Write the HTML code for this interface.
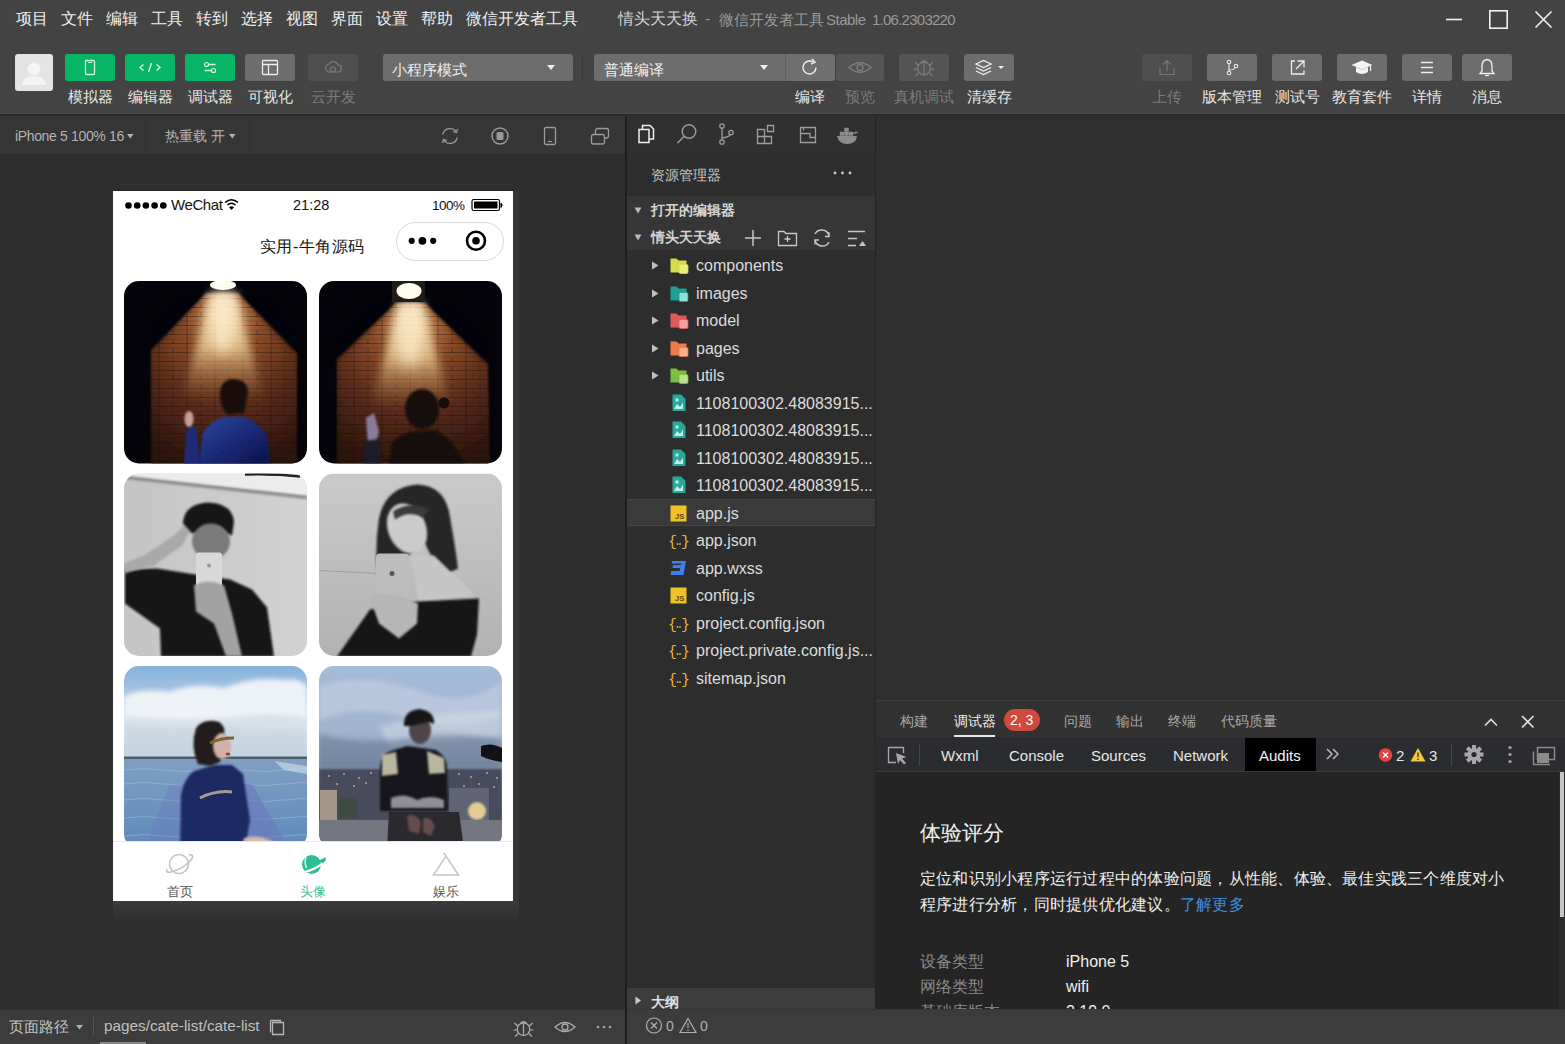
<!DOCTYPE html>
<html><head><meta charset="utf-8">
<style>
*{box-sizing:border-box;margin:0;padding:0}
html,body{width:1565px;height:1044px;overflow:hidden;background:#434343;font-family:"Liberation Sans",sans-serif;color:#e6e6e6}
.a{position:absolute}
.t{position:absolute;white-space:nowrap;line-height:1}
svg{position:absolute;overflow:visible}
/* regions */
#top{left:0;top:0;width:1565px;height:115px;background:#434343}
#tbline{left:0;top:113px;width:1565px;height:3px;background:linear-gradient(#4a4a4a 0,#4a4a4a 33%,#2a2a2a 33%)}
#sim{left:0;top:116px;width:625px;height:893px;background:#2e2e2e}
#simbar{left:0;top:116px;width:625px;height:39px;background:#363636;border-bottom:1.5px solid #2a2a2a}
#vsep{left:625px;top:116px;width:2px;height:930px;background:#1e1e1e}
#exp{left:627px;top:116px;width:248px;height:893px;background:#2d2d2d}
#expbar{left:627px;top:116px;width:248px;height:36px;background:#303030}
#edit{left:875px;top:116px;width:690px;height:584px;background:#2f2f2f;border-left:1px solid #232323}
#dbg{left:875px;top:700px;width:690px;height:309px;background:#242424;border-left:1px solid #232323}
#status{left:0;top:1009px;width:1565px;height:35px;background:#3c3c3c;border-top:1px solid #353535}
.gbtn{position:absolute;top:54px;width:50px;height:27px;border-radius:3px;background:#07b565}
.btn{position:absolute;top:54px;width:50px;height:27px;border-radius:3px;background:#666}
.lbl{position:absolute;top:89px;font-size:15px;line-height:15px;font-weight:500;text-align:center;color:#e8e8e8;white-space:nowrap}
.menu{position:absolute;top:11px;font-size:16px;line-height:16px;font-weight:500;color:#f0f0f0}
</style></head><body>
<div id="top" class="a"></div>
<div id="tbline" class="a"></div>
<div id="sim" class="a"></div>
<div id="simbar" class="a"></div>
<div id="exp" class="a"></div>
<div id="expbar" class="a"></div>
<div id="edit" class="a"></div>
<div id="dbg" class="a"></div>
<div id="status" class="a"></div>
<div id="vsep" class="a"></div>

<!-- MENU -->
<div class="menu" style="left:16px">项目</div>
<div class="menu" style="left:61px">文件</div>
<div class="menu" style="left:106px">编辑</div>
<div class="menu" style="left:151px">工具</div>
<div class="menu" style="left:196px">转到</div>
<div class="menu" style="left:241px">选择</div>
<div class="menu" style="left:286px">视图</div>
<div class="menu" style="left:331px">界面</div>
<div class="menu" style="left:376px">设置</div>
<div class="menu" style="left:421px">帮助</div>
<div class="menu" style="left:466px">微信开发者工具</div>
<div class="menu" style="left:618px;color:#d2d2d2">情头天天换</div>
<div class="menu" style="left:705px;color:#9a9a9a">-</div>
<div class="menu" style="left:719px;top:12px;font-size:15px;color:#9a9a9a">微信开发者工具</div>
<div class="menu" style="left:826px;top:12px;color:#9a9a9a;font-size:15px;letter-spacing:-0.5px">Stable</div>
<div class="menu" style="left:872px;top:12px;color:#9a9a9a;font-size:15px;letter-spacing:-0.75px">1.06.2303220</div>


<!-- TOOLBAR -->
<div class="a" style="left:15px;top:54px;width:38px;height:37px;border-radius:3px;background:#e4e4e4"></div>
<svg style="left:15px;top:54px" width="38" height="37"><circle cx="19" cy="15" r="6.5" fill="#f4f4f4"/><path d="M7 31 Q8 22 19 22 Q30 22 31 31 Z" fill="#f4f4f4"/></svg>
<div class="gbtn" style="left:65px"></div>
<svg style="left:65px;top:54px" width="50" height="27"><rect x="20.5" y="6.5" width="9" height="14" rx="1" fill="none" stroke="#d8f5e4" stroke-width="1.3"/><line x1="23" y1="8.5" x2="27" y2="8.5" stroke="#d8f5e4" stroke-width="1"/></svg>
<div class="gbtn" style="left:125px"></div>
<svg style="left:125px;top:54px" width="50" height="27"><path d="M18.5 10.5 L15 13.5 L18.5 16.5 M31.5 10.5 L35 13.5 L31.5 16.5 M26.5 9 L23.5 18" fill="none" stroke="#d8f5e4" stroke-width="1.4"/></svg>
<div class="gbtn" style="left:185px"></div>
<svg style="left:185px;top:54px" width="50" height="27"><path d="M19.5 10.5 H30.5 M19.5 16.5 H30.5" stroke="#d8f5e4" stroke-width="1.3"/><circle cx="21.5" cy="10.5" r="2" fill="#0fb464" stroke="#d8f5e4" stroke-width="1.2"/><circle cx="28.5" cy="16.5" r="2" fill="#0fb464" stroke="#d8f5e4" stroke-width="1.2"/></svg>
<div class="btn" style="left:245px;background:#6d6d6d"></div>
<svg style="left:245px;top:54px" width="50" height="27"><rect x="17.5" y="6.5" width="15" height="14" rx="1" fill="none" stroke="#eee" stroke-width="1.3"/><path d="M17.5 10.5 H32.5 M23.5 10.5 V20.5" stroke="#eee" stroke-width="1.3"/></svg>
<div class="btn" style="left:308px;background:#4f4f4f"></div>
<svg style="left:308px;top:54px" width="50" height="27"><path d="M19 17 A4 4 0 0 1 21 10 A5 5 0 0 1 30 11 A3.5 3.5 0 0 1 30 18 H22 A3 3 0 0 1 19 17 Z" fill="none" stroke="#7a7a7a" stroke-width="1.2"/><circle cx="25" cy="15.5" r="2.5" fill="none" stroke="#7a7a7a" stroke-width="1.1"/></svg>
<div class="lbl" style="left:65px;width:50px">模拟器</div>
<div class="lbl" style="left:125px;width:50px">编辑器</div>
<div class="lbl" style="left:185px;width:50px">调试器</div>
<div class="lbl" style="left:245px;width:50px">可视化</div>
<div class="lbl" style="left:308px;width:50px;color:#7c7c7c">云开发</div>

<div class="btn" style="left:383px;width:190px;background:#6d6d6d"></div>
<div class="t" style="left:392px;top:61.5px;font-size:15px;font-weight:500;color:#f0f0f0">小程序模式</div>
<svg style="left:547px;top:65px" width="9" height="5"><path d="M0 0 H8 L4 5 Z" fill="#eee"/></svg>
<div class="a" style="left:582px;top:54px;width:1px;height:27px;background:#363636"></div>

<div class="btn" style="left:594px;width:191px;background:#6d6d6d;border-radius:3px 0 0 3px"></div>
<div class="t" style="left:604px;top:61.5px;font-size:15px;font-weight:500;color:#f0f0f0">普通编译</div>
<svg style="left:760px;top:65px" width="9" height="5"><path d="M0 0 H8 L4 5 Z" fill="#eee"/></svg>
<div class="btn" style="left:785px;width:50px;background:#707070;border-radius:0 3px 3px 0;border-left:1px solid #5f5f5f"></div>
<svg style="left:785px;top:54px" width="50" height="27"><path d="M31 13.5 A6.5 6.5 0 1 1 28 8" fill="none" stroke="#f0f0f0" stroke-width="1.4"/><path d="M27 5 L30 8.3 L26 10" fill="none" stroke="#f0f0f0" stroke-width="1.4"/></svg>
<div class="btn" style="left:836px;width:48px;background:#555"></div>
<svg style="left:836px;top:54px" width="48" height="27"><path d="M13 13.5 Q24 4 35 13.5 Q24 23 13 13.5 Z" fill="none" stroke="#7c7c7c" stroke-width="1.3"/><circle cx="24" cy="13.5" r="3" fill="none" stroke="#7c7c7c" stroke-width="1.3"/></svg>
<div class="btn" style="left:899px;width:50px;background:#555"></div>
<svg style="left:899px;top:54px" width="50" height="27"><circle cx="25" cy="14.5" r="6.3" fill="none" stroke="#7c7c7c" stroke-width="1.2"/><path d="M22 8.5 Q25 5.3 28 8.5 M25 6.8 V20.8 M19.1 11.3 L16 8.3 M18.7 15.3 H15 M19.8 18.8 L16.5 21.8 M30.9 11.3 L34 8.3 M31.3 15.3 H35 M30.2 18.8 L33.5 21.8" fill="none" stroke="#7c7c7c" stroke-width="1.2"/></svg>
<div class="btn" style="left:964px;width:50px;background:#6d6d6d"></div>
<svg style="left:964px;top:54px" width="50" height="27"><path d="M12 10 L19.5 6.5 L27 10 L19.5 13.5 Z" fill="none" stroke="#f0f0f0" stroke-width="1.3"/><path d="M12 13.5 L19.5 17 L27 13.5 M12 17 L19.5 20.5 L27 17" fill="none" stroke="#f0f0f0" stroke-width="1.3"/><path d="M34 12 H40 L37 15 Z" fill="#f0f0f0"/></svg>
<div class="lbl" style="left:785px;width:50px">编译</div>
<div class="lbl" style="left:835px;width:50px;color:#7c7c7c">预览</div>
<div class="lbl" style="left:894px;width:60px;color:#7c7c7c">真机调试</div>
<div class="lbl" style="left:959px;width:60px">清缓存</div>

<div class="btn" style="left:1142px;width:50px;background:#4f4f4f"></div>
<svg style="left:1142px;top:54px" width="50" height="27"><path d="M18 14 V20.5 H32 V14 M25 17 V6.5 M21 10.5 L25 6.5 L29 10.5" fill="none" stroke="#777" stroke-width="1.2"/></svg>
<div class="btn" style="left:1207px;width:50px;background:#6d6d6d"></div>
<svg style="left:1207px;top:54px" width="50" height="27"><circle cx="22" cy="8" r="1.8" fill="none" stroke="#eee" stroke-width="1.1"/><circle cx="22" cy="19" r="1.8" fill="none" stroke="#eee" stroke-width="1.1"/><circle cx="29" cy="12" r="1.8" fill="none" stroke="#eee" stroke-width="1.1"/><path d="M22 9.8 V17.2 M22 16 Q27 16 28 13.6" fill="none" stroke="#eee" stroke-width="1.1"/></svg>
<div class="btn" style="left:1272px;width:50px;background:#6d6d6d"></div>
<svg style="left:1272px;top:54px" width="50" height="27"><path d="M23 7 H19.5 V20 H32 V16.5 M25.5 7 H32 V13.5 M32 7 L24 15" fill="none" stroke="#eee" stroke-width="1.3"/></svg>
<div class="btn" style="left:1337px;width:50px;background:#6d6d6d"></div>
<svg style="left:1337px;top:54px" width="50" height="27"><path d="M14.5 11 L25 6.5 L35.5 11 L25 15.5 Z" fill="#f4f4f4"/><path d="M19 13 V18 Q25 22 31 18 V13 L25 15.8 Z" fill="#f4f4f4"/><path d="M33.5 12 V17" stroke="#f4f4f4" stroke-width="1.2"/></svg>
<div class="btn" style="left:1402px;width:50px;background:#6d6d6d"></div>
<svg style="left:1402px;top:54px" width="50" height="27"><path d="M19 8.5 H31 M19 13.5 H31 M19 18.5 H31" stroke="#eee" stroke-width="1.3"/></svg>
<div class="btn" style="left:1462px;width:50px;background:#6d6d6d"></div>
<svg style="left:1462px;top:54px" width="50" height="27"><path d="M25 5.5 Q30 6 30 12 V17 L32 19.5 H18 L20 17 V12 Q20 6 25 5.5 Z" fill="none" stroke="#f0f0f0" stroke-width="1.3"/><path d="M23 21.5 H27" stroke="#f0f0f0" stroke-width="1.3"/></svg>
<div class="lbl" style="left:1142px;width:50px;color:#7c7c7c">上传</div>
<div class="lbl" style="left:1197px;width:70px">版本管理</div>
<div class="lbl" style="left:1267px;width:60px">测试号</div>
<div class="lbl" style="left:1327px;width:70px">教育套件</div>
<div class="lbl" style="left:1402px;width:50px">详情</div>
<div class="lbl" style="left:1462px;width:50px">消息</div>

<!-- window controls -->
<svg style="left:1440px;top:5px" width="120" height="30"><path d="M6 14.5 H22" stroke="#f2f2f2" stroke-width="1.6"/><rect x="49.8" y="5.8" width="17.4" height="17.4" fill="none" stroke="#f2f2f2" stroke-width="1.6"/><path d="M95.5 6.5 L111.5 22.5 M111.5 6.5 L95.5 22.5" stroke="#f2f2f2" stroke-width="1.6"/></svg>

<!-- SIM TOOLBAR -->
<div class="t" style="left:15px;top:128.5px;font-size:14px;color:#b4b4b4;letter-spacing:-0.35px">iPhone 5 100% 16</div>
<svg style="left:127px;top:133.5px" width="7" height="5"><path d="M0 0 H6.5 L3.25 4.5 Z" fill="#b4b4b4"/></svg>
<div class="a" style="left:145px;top:118px;width:1px;height:32px;background:#2f2f2f"></div>
<div class="t" style="left:165px;top:128.5px;font-size:14px;font-weight:500;color:#b4b4b4">热重载 开</div>
<svg style="left:229px;top:133.5px" width="7" height="5"><path d="M0 0 H6.5 L3.25 4.5 Z" fill="#b4b4b4"/></svg>
<div class="a" style="left:249px;top:118px;width:1px;height:32px;background:#2f2f2f"></div>
<svg style="left:440px;top:126px" width="180" height="20">
 <path d="M2.7 8.5 A7.5 7.5 0 0 1 16.3 6 M17.3 11.5 A7.5 7.5 0 0 1 3.7 14" fill="none" stroke="#9a9a9a" stroke-width="1.3"/>
 <path d="M17.5 3 L16.5 6.5 L13 5.5 M2.5 17 L3.5 13.5 L7 14.5" fill="none" stroke="#9a9a9a" stroke-width="1.3"/>
 <circle cx="60" cy="10" r="8" fill="none" stroke="#9a9a9a" stroke-width="1.4"/>
 <rect x="56.5" y="6" width="7" height="8" rx="1.5" fill="#9a9a9a"/>
 <rect x="104.5" y="1.5" width="11" height="17" rx="1.5" fill="none" stroke="#9a9a9a" stroke-width="1.3"/>
 <path d="M108 15.5 H112" stroke="#9a9a9a" stroke-width="1.2"/>
 <rect x="155.5" y="2.5" width="13" height="9.5" rx="2" fill="none" stroke="#9a9a9a" stroke-width="1.3"/>
 <rect x="151.5" y="8.5" width="13" height="9.5" rx="2" fill="#363636" stroke="#9a9a9a" stroke-width="1.3"/>
</svg>

<!-- PHONE -->
<div class="a" style="left:113px;top:901px;width:406px;height:22px;background:linear-gradient(#3b3b3b,rgba(46,46,46,0))"></div>
<div class="a" style="left:113px;top:191px;width:400px;height:710px;background:#fff;box-shadow:0 -1px 0 0 #252525,6px 0 0 0 #363636"></div>
<svg style="left:113px;top:191px" width="400" height="80">
 <circle cx="15.5" cy="14.5" r="3.3" fill="#000"/><circle cx="24.2" cy="14.5" r="3.3" fill="#000"/><circle cx="32.9" cy="14.5" r="3.3" fill="#000"/><circle cx="41.6" cy="14.5" r="3.3" fill="#000"/><circle cx="50.3" cy="14.5" r="3.3" fill="#000"/>
 <path d="M112 11.5 Q118.5 6 125 11.5" fill="none" stroke="#000" stroke-width="1.6"/>
 <path d="M114.5 14 Q118.5 10.5 122.5 14" fill="none" stroke="#000" stroke-width="1.6"/>
 <path d="M116 16.3 L118.5 19 L121 16.3 Q118.5 14 116 16.3 Z" fill="#000"/>
 <rect x="359" y="8.5" width="27.5" height="11" rx="1.8" fill="none" stroke="#000" stroke-width="1.2"/>
 <rect x="361" y="10.5" width="23.5" height="7" fill="#000"/>
 <path d="M388 12 Q390.5 14 388 16.5 Z" fill="#000" stroke="#000" stroke-width="1"/>
</svg>
<div class="t" style="left:171px;top:197px;font-size:15px;color:#111;letter-spacing:-0.4px">WeChat</div>
<div class="t" style="left:293px;top:198px;font-size:14.5px;color:#111">21:28</div>
<div class="t" style="left:432px;top:199px;font-size:13.5px;color:#111;letter-spacing:-0.5px">100%</div>
<div class="t" style="left:260px;top:238.5px;font-size:16px;color:#111;letter-spacing:0.45px">实用-牛角源码</div>
<div class="a" style="left:395.5px;top:221.5px;width:108px;height:39px;border-radius:20px;border:1.3px solid #dadada;background:#fff"></div>
<svg style="left:395px;top:221px" width="110" height="40">
 <circle cx="16.7" cy="19.8" r="3.1" fill="#000"/><circle cx="27.4" cy="19.8" r="3.9" fill="#000"/><circle cx="38.2" cy="19.8" r="3.1" fill="#000"/>
 <circle cx="81" cy="19.8" r="9" fill="none" stroke="#000" stroke-width="2.6"/><circle cx="81" cy="19.8" r="3.8" fill="#000"/>
</svg>

<!-- PHOTOS -->
<svg style="left:113px;top:271px" width="400" height="570">
<defs>
 <clipPath id="cp"><rect x="0" y="0" width="183" height="182.5" rx="15"/></clipPath>
 <filter id="b1" x="-20%" y="-20%" width="140%" height="140%"><feGaussianBlur stdDeviation="2.5"/></filter>
 <filter id="b2" x="-20%" y="-20%" width="140%" height="140%"><feGaussianBlur stdDeviation="1"/></filter>
 <filter id="b3" x="-30%" y="-30%" width="160%" height="160%"><feGaussianBlur stdDeviation="4"/></filter>
 <filter id="b4" x="-50%" y="-50%" width="200%" height="200%"><feGaussianBlur stdDeviation="7"/></filter>
 <radialGradient id="wall1" cx="0.5" cy="0.1" r="0.95">
  <stop offset="0" stop-color="#d0905a"/><stop offset="0.3" stop-color="#8c4c2a"/><stop offset="0.65" stop-color="#55291a"/><stop offset="1" stop-color="#2a140a"/>
 </radialGradient>
 <linearGradient id="beam" x1="0" y1="0" x2="0" y2="1"><stop offset="0" stop-color="#fff6d8"/><stop offset="0.5" stop-color="#f2d69c"/><stop offset="1" stop-color="#b07a48" stop-opacity="0"/></linearGradient>
 <linearGradient id="blue1" x1="0" y1="0" x2="1" y2="1"><stop offset="0" stop-color="#2c4aa0"/><stop offset="0.5" stop-color="#1a2a78"/><stop offset="1" stop-color="#0a1248"/></linearGradient>
 <pattern id="brick" width="28" height="9" patternUnits="userSpaceOnUse"><path d="M0 8.5 H28 M7 0 V8.5 M21 4.5 V9" stroke="#1a0c06" stroke-width="1" opacity="0.4" fill="none"/><path d="M0 4 H28" stroke="#1a0c06" stroke-width="0.8" opacity="0.25"/></pattern>
 <linearGradient id="gw3" x1="0" y1="0" x2="1" y2="0"><stop offset="0" stop-color="#c4c4c4"/><stop offset="1" stop-color="#d2d2d2"/></linearGradient>
 <linearGradient id="gw4" x1="0" y1="0" x2="0" y2="1"><stop offset="0" stop-color="#cacaca"/><stop offset="1" stop-color="#b2b2b2"/></linearGradient>
 <linearGradient id="sky5" x1="0" y1="0" x2="0" y2="1"><stop offset="0" stop-color="#86b2da"/><stop offset="0.12" stop-color="#a0c2e0"/><stop offset="0.32" stop-color="#e0e8ee"/><stop offset="0.55" stop-color="#bccfdc"/><stop offset="0.7" stop-color="#a8bdd0"/></linearGradient>
 <linearGradient id="sea5" x1="0" y1="0" x2="0" y2="1"><stop offset="0" stop-color="#7f9fc2"/><stop offset="1" stop-color="#5e88ba"/></linearGradient>
 <linearGradient id="sky6" x1="0" y1="0" x2="0" y2="1"><stop offset="0" stop-color="#a5bcda"/><stop offset="0.35" stop-color="#a0b4cc"/><stop offset="0.6" stop-color="#7d90aa"/><stop offset="1" stop-color="#5b6a84"/></linearGradient>
</defs>

<!-- photo1 -->
<g transform="translate(11,10)" clip-path="url(#cp)">
 <rect width="183" height="183" fill="#04040a"/>
 <polygon points="82,12 114,12 173,72 173,183 27,183 27,69" fill="url(#wall1)" filter="url(#b2)"/>
 <polygon points="82,12 114,12 173,72 173,183 27,183 27,69" fill="url(#brick)"/>
 <polygon points="86,12 112,12 140,120 58,120" fill="url(#beam)" opacity="0.75" filter="url(#b3)"/>
 <ellipse cx="99" cy="40" rx="13" ry="32" fill="#fff4d4" opacity="0.7" filter="url(#b4)"/>
 <ellipse cx="99" cy="4" rx="13" ry="5" fill="#fffbee"/>
 <path d="M27 69 L82 12 L60 12 L27 45 Z M173 72 L114 12 L140 12 L173 50 Z" fill="#04040a" opacity="0.5" filter="url(#b3)"/>
 <path d="M74 183 L79 152 Q86 140 100 136 L121 136 Q136 142 144 157 L146 183 Z" fill="url(#blue1)" filter="url(#b2)"/>
 <path d="M60 183 L62 152 L67 142 L73 150 L76 183 Z" fill="#1a2a78" filter="url(#b2)"/>
 <ellipse cx="65" cy="138" rx="4.5" ry="8" fill="#c4a094" filter="url(#b2)"/>
 <path d="M96 112 Q97 98 110 98 Q124 99 124 112 L120 132 L104 134 Q95 126 96 112 Z" fill="#1a100c" filter="url(#b2)"/>
</g>
<!-- photo2 -->
<g transform="translate(206,10)" clip-path="url(#cp)">
 <rect width="183" height="183" fill="#04040a"/>
 <polygon points="77,22 106,22 169,83 171,183 18,183 18,78" fill="url(#wall1)" filter="url(#b2)"/>
 <polygon points="77,22 106,22 169,83 171,183 18,183 18,78" fill="url(#brick)"/>
 <polygon points="79,22 104,22 132,128 52,128" fill="url(#beam)" opacity="0.75" filter="url(#b3)"/>
 <ellipse cx="91" cy="52" rx="13" ry="34" fill="#fff4d4" opacity="0.65" filter="url(#b4)"/>
 <rect x="73" y="0" width="33" height="21" fill="#221c16"/>
 <ellipse cx="90" cy="10" rx="12.5" ry="8" fill="#fffcf0"/>
 <path d="M18 78 L77 22 L50 22 L18 55 Z M169 83 L106 22 L135 22 L171 60 Z" fill="#04040a" opacity="0.5" filter="url(#b3)"/>
 <path d="M70 183 L73 162 Q80 153 92 151 L116 149 Q132 156 143 179 L145 183 Z" fill="#120b09" filter="url(#b2)"/>
 <ellipse cx="103" cy="128" rx="17" ry="20" fill="#140d0a" filter="url(#b2)"/>
 <circle cx="125" cy="122" r="5.5" fill="#140d0a"/>
 <path d="M47 137 L55 132 L60 150 L57 163 L49 163 Z" fill="#8a7a9c" filter="url(#b2)"/>
 <path d="M46 160 L60 158 L62 183 L44 183 Z" fill="#1e1a2a" filter="url(#b2)"/>
</g>
<!-- photo3 -->
<g transform="translate(11,202.5)" clip-path="url(#cp)">
 <rect width="183" height="183" fill="url(#gw3)"/>
 <polygon points="0,0 183,0 183,22 0,3" fill="#ececec"/>
 <path d="M2 4 L183 24" stroke="#8e8e8e" stroke-width="3.5" filter="url(#b2)"/>
 <path d="M121 1 Q150 0 176 3" stroke="#222" stroke-width="2.5"/>
 <path d="M1 96 L1 130 L36 155 L37 183 L150 183 L143 134 L128 116 L106 106 L71 101 L33 95 Z" fill="#121212" filter="url(#b2)"/>
 <path d="M0 90 L20 82 L50 62 L60 52 L66 58 L58 72 L30 92 L0 100 Z" fill="#a9a9a9" filter="url(#b2)"/>
 <path d="M59 50 Q60 30 85 29 Q108 30 110 48 L108 62 L98 58 L68 60 Z" fill="#141414" filter="url(#b2)"/>
 <ellipse cx="87" cy="68" rx="19" ry="18" fill="#7a7a7a" filter="url(#b2)"/>
 <rect x="72" y="79" width="26" height="38" rx="3" fill="#d9d9d9"/>
 <circle cx="85" cy="92" r="2" fill="#9a9a9a"/>
 <path d="M70 112 Q84 104 100 112 L108 140 L118 183 L102 183 L90 150 L72 138 Z" fill="#a2a2a2" filter="url(#b2)"/>
</g>
<!-- photo4 -->
<g transform="translate(206,202.5)" clip-path="url(#cp)">
 <rect width="183" height="183" fill="url(#gw4)"/>
 <path d="M0 97 L60 100" stroke="#8a8a8a" stroke-width="1" opacity="0.6"/>
 <path d="M60 45 Q66 14 98 11 Q124 12 130 38 Q134 60 137 80 L139 95 L128 100 L116 90 L106 70 L80 88 L66 96 L58 96 Q56 70 60 45 Z" fill="#262626" filter="url(#b2)"/>
 <ellipse cx="88" cy="55" rx="19" ry="26" transform="rotate(-22 88 55)" fill="#cbcbcb" filter="url(#b2)"/>
 <path d="M74 38 Q92 26 110 36 L104 44 Q90 36 76 46 Z" fill="#3a3a3a" filter="url(#b2)"/>
 <path d="M92 82 L115 82 L156 122 L100 130 Z" fill="#c6c6c6" filter="url(#b2)"/>
 <rect x="57" y="80" width="33" height="48" rx="4" fill="#bdbdbd"/>
 <circle cx="73" cy="100" r="2.5" fill="#555"/>
 <path d="M18 183 L51 136 L99 128 L160 125 L158 161 L152 183 Z" fill="#151515" filter="url(#b2)"/>
 <path d="M50 122 Q70 116 99 130 L98 150 L80 165 L60 150 Z" fill="#b6b6b6" filter="url(#b2)"/>
</g>
<!-- photo5 -->
<g transform="translate(11,395)" clip-path="url(#cp)">
 <rect width="183" height="183" fill="url(#sky5)"/>
 <path d="M0 30 Q20 22 45 26 Q70 16 100 22 Q130 10 160 14 Q175 12 183 20 L183 62 Q140 66 100 58 Q50 64 0 58 Z" fill="#f4f7fa" opacity="0.92" filter="url(#b1)"/>
 <path d="M0 50 Q60 56 120 50 Q160 46 183 52 L183 88 L0 88 Z" fill="#c5d4e0" opacity="0.6" filter="url(#b1)"/>
 <rect y="90.5" width="183" height="2.5" fill="#4f5e6c"/>
 <rect y="93" width="183" height="92" fill="url(#sea5)"/>
 <g stroke="#a9c3dc" stroke-width="1" opacity="0.5" fill="none">
  <path d="M0 104 Q20 101 40 104 T80 104 T120 104 T160 104 T200 104"/>
  <path d="M0 118 Q20 115 40 118 T80 118 T120 118 T160 118 T200 118"/>
  <path d="M0 134 Q20 131 40 134 T80 134 T120 134 T160 134 T200 134"/>
  <path d="M0 152 Q20 149 40 152 T80 152 T120 152 T160 152 T200 152"/>
  <path d="M0 170 Q20 167 40 170 T80 170 T120 170 T160 170 T200 170"/>
 </g>
 <path d="M150 95 L183 100 L183 108 L160 104 Z" fill="#d6e0ea" opacity="0.6"/>
 <path d="M110 118 L128 118 L165 183 L95 183 Z" fill="#6a78c0" opacity="0.6"/>
 <path d="M45 120 L60 118 L55 183 L20 183 Z" fill="#6a78c0" opacity="0.35"/>
 <path d="M56 183 L57 129 Q60 112 70 105 L90 99 L108 99 L119 108 L126 154 L121 183 Z" fill="#1e2964" filter="url(#b2)"/>
 <path d="M76 132 Q92 124 108 126" stroke="#c8b890" stroke-width="3" fill="none" opacity="0.8"/>
 <path d="M72 62 Q80 52 95 56 Q102 60 100 70 L96 96 L86 100 L74 98 Q66 80 72 62 Z" fill="#241c1c" filter="url(#b2)"/>
 <ellipse cx="98" cy="80" rx="9" ry="13" fill="#d2b2a8" filter="url(#b2)"/>
 <path d="M86 77 Q96 72 110 72" stroke="#7a6430" stroke-width="3" fill="none"/>
 <ellipse cx="104" cy="88" rx="2.5" ry="1.5" fill="#a04040"/>
 <path d="M118 183 L120 172 Q135 168 150 176 L152 183 Z" fill="#d8b8a8" filter="url(#b2)"/>
</g>
<!-- photo6 -->
<g transform="translate(206,395)" clip-path="url(#cp)">
 <rect width="183" height="183" fill="url(#sky6)"/>
 <path d="M0 20 Q50 5 110 28 Q150 40 183 15 L183 50 Q130 70 80 50 Q40 38 0 55 Z" fill="#c8d4e4" opacity="0.55" filter="url(#b1)"/>
 <path d="M60 60 Q120 45 183 45 L183 70 Q120 75 70 80 Z" fill="#dbe3ee" opacity="0.45" filter="url(#b1)"/>
 <path d="M0 68 Q40 80 90 72 Q140 65 183 75 L183 104 L0 104 Z" fill="#687894" opacity="0.55" filter="url(#b1)"/>
 <rect y="103" width="183" height="52" fill="#474c5c" filter="url(#b2)"/>
 <g fill="#e6d8b0" opacity="0.75">
  <circle cx="10" cy="110" r="0.9"/><circle cx="25" cy="108" r="0.9"/><circle cx="40" cy="112" r="0.9"/><circle cx="52" cy="107" r="0.9"/><circle cx="140" cy="108" r="0.9"/><circle cx="152" cy="111" r="0.9"/><circle cx="168" cy="107" r="0.9"/><circle cx="178" cy="112" r="0.9"/>
  <circle cx="18" cy="118" r="0.9"/><circle cx="35" cy="120" r="0.9"/><circle cx="47" cy="117" r="0.9"/><circle cx="145" cy="120" r="0.9"/><circle cx="160" cy="118" r="0.9"/><circle cx="175" cy="121" r="0.9"/>
 </g>
 <rect x="1" y="124" width="17" height="30" fill="#b5a592" opacity="0.85"/>
 <rect x="20" y="132" width="18" height="20" fill="#3e4a3c" opacity="0.8" filter="url(#b2)"/>
 <rect x="130" y="122" width="40" height="32" fill="#6a6e80" opacity="0.7"/>
 <ellipse cx="158" cy="145" rx="9" ry="9" fill="#f0d898" opacity="0.9" filter="url(#b2)"/>
 <rect y="154" width="183" height="30" fill="#74767f"/>
 <path d="M162 80 Q172 76 183 82 L183 96 Q170 94 162 90 Z" fill="#121216"/>
 <path d="M68 183 L70 146 L140 146 L145 183 Z" fill="#2a292e"/>
 <path d="M61 145 L61 101 Q63 88 72 85 L88 80 L117 84 Q127 90 128 101 L129 145 Z" fill="#16161d" filter="url(#b2)"/>
 <path d="M63 89 L77 86 L79 108 L63 110 Z M108 85 L125 92 L126 107 L110 108 Z" fill="#b9b6a0" filter="url(#b2)"/>
 <path d="M72 132 Q85 126 98 134 Q112 128 125 134 L125 142 L72 142 Z" fill="#d0d0d8" opacity="0.65" filter="url(#b2)"/>
 <ellipse cx="101" cy="64" rx="11" ry="14" fill="#50444a" filter="url(#b2)"/>
 <path d="M85 60 Q84 45 100 43 Q116 45 115 58 L110 56 L92 60 Z" fill="#141418" filter="url(#b2)"/>
 <path d="M88 150 Q96 146 102 156 L100 168 L90 165 Z M104 152 Q112 150 116 160 L112 170 L104 166 Z" fill="#7a5a58" opacity="0.75" filter="url(#b2)"/>
</g>
</svg>

<!-- TABBAR -->
<div class="a" style="left:113px;top:841px;width:400px;height:60px;background:#fff;border-top:1px solid #e8e8e8"></div>
<svg style="left:113px;top:842px" width="400" height="40">
 <circle cx="66" cy="22" r="9.5" fill="none" stroke="#c4c4c4" stroke-width="1.6"/>
 <path d="M54 27 Q52 31 58 30 Q70 27 78 18 Q82 12 76 13" fill="none" stroke="#c4c4c4" stroke-width="1.6"/>
 <circle cx="198.5" cy="22.5" r="9.5" fill="#2dbf93"/>
 <path d="M186 31 Q196 30 206 24 Q214 19 211 17" fill="none" stroke="#fff" stroke-width="2.2"/>
 <path d="M204 19.5 Q210 16 212.5 15.5 Q214 18 210 21 Z" fill="#2dbf93"/>
 <path d="M193 15 Q191 20 193.5 26" fill="none" stroke="#c8f5e6" stroke-width="1.6"/>
 <path d="M333 33 L320.5 33 L333 14 L345.5 33 Z M320 33 H346 M333 14 L331 11" fill="none" stroke="#c4c4c4" stroke-width="1.5"/>
</svg>
<div class="t" style="left:167px;top:885px;font-size:13px;font-weight:500;color:#555">首页</div>
<div class="t" style="left:300px;top:885px;font-size:13px;font-weight:500;color:#3cc19a">头像</div>
<div class="t" style="left:433px;top:885px;font-size:13px;font-weight:500;color:#555">娱乐</div>

<!-- SIM STATUS -->
<div class="t" style="left:9px;top:1019px;font-size:15px;font-weight:500;color:#c4c4c4">页面路径</div>
<svg style="left:76px;top:1025px" width="8" height="5"><path d="M0 0 H7 L3.5 4.5 Z" fill="#b0b0b0"/></svg>
<div class="a" style="left:93px;top:1017px;width:1px;height:18px;background:#555"></div>
<div class="t" style="left:104px;top:1018px;font-size:15.3px;color:#c0c0c0">pages/cate-list/cate-list</div>
<svg style="left:266px;top:1017px" width="20" height="20"><path d="M4.5 3.5 H14.5 V4.5 M4.5 3.5 V15.5 M6.5 5.5 H17.5 V17.5 H6.5 Z" fill="none" stroke="#b8b8b8" stroke-width="1.3"/></svg>
<div class="a" style="left:100px;top:1042px;width:46px;height:2px;background:#8a8a8a"></div>
<svg style="left:510px;top:1016px" width="110" height="22">
 <circle cx="13.5" cy="13.2" r="6.3" fill="none" stroke="#b0b0b0" stroke-width="1.2"/><path d="M10.5 7.2 Q13.5 4 16.5 7.2 M13.5 5.5 V19.5 M7.6 10 L4.5 7 M7.2 14 H3.5 M8.3 17.5 L5 20.5 M19.4 10 L22.5 7 M19.8 14 H23.5 M18.7 17.5 L22 20.5" fill="none" stroke="#b0b0b0" stroke-width="1.2"/>
 <path d="M45 11 Q55 2 65 11 Q55 20 45 11 Z" fill="none" stroke="#aaa" stroke-width="1.3"/><circle cx="55" cy="11" r="3" fill="none" stroke="#aaa" stroke-width="1.3"/>
 <circle cx="88" cy="11" r="1.3" fill="#aaa"/><circle cx="94" cy="11" r="1.3" fill="#aaa"/><circle cx="100" cy="11" r="1.3" fill="#aaa"/>
</svg>

<!-- EXPLORER -->
<svg style="left:627px;top:116px" width="248" height="40">
 <path d="M12 13.5 V26.5 H22 V13.5 Z" fill="none" stroke="#f0f0f0" stroke-width="1.5"/>
 <path d="M15.5 13.5 V9.5 H23 L26.5 13 V23 H22" fill="none" stroke="#f0f0f0" stroke-width="1.5"/>
 <circle cx="62" cy="15.5" r="6.8" fill="none" stroke="#9c9c9c" stroke-width="1.4"/>
 <path d="M57.2 20.3 L50.5 27" stroke="#9c9c9c" stroke-width="1.5"/>
 <circle cx="95" cy="10" r="2.2" fill="none" stroke="#9c9c9c" stroke-width="1.3"/>
 <circle cx="95" cy="26" r="2.2" fill="none" stroke="#9c9c9c" stroke-width="1.3"/>
 <circle cx="104" cy="16.5" r="2.2" fill="none" stroke="#9c9c9c" stroke-width="1.3"/>
 <path d="M95 12.2 V23.8 M95 22 Q102 21 103.5 18.7" fill="none" stroke="#9c9c9c" stroke-width="1.3"/>
 <path d="M130.5 13.5 H137.5 V20.5 H130.5 Z M130.5 20.5 H137.5 V27.5 H130.5 Z M137.5 20.5 H144.5 V27.5 H137.5 Z M140.5 9.5 H146.5 V15.5 H140.5 Z" fill="none" stroke="#9c9c9c" stroke-width="1.3"/>
 <path d="M173.5 11.5 H188.5 V26.5 H173.5 Z M173.5 17.5 H183 V21.5 H188.5 M176.5 11.5 V14.5" fill="none" stroke="#9c9c9c" stroke-width="1.3"/>
 <path d="M210 20 H230 Q229 28 220 28 Q212 28 210 20 Z" fill="#8c8c8c"/>
 <path d="M213 16 H217 V19.5 H213 Z M217.5 16 H221.5 V19.5 H217.5 Z M222 16 H226 V19.5 H222 Z M217.5 12 H221.5 V15.5 H217.5 Z M226 18 Q229 14 231 17" fill="#8c8c8c" stroke="#8c8c8c" stroke-width="0.5"/>
</svg>
<div class="t" style="left:651px;top:168px;font-size:14px;font-weight:500;color:#c8c8c8">资源管理器</div>
<svg style="left:832px;top:170px" width="24" height="6"><circle cx="3" cy="3" r="1.4" fill="#ccc"/><circle cx="10.5" cy="3" r="1.4" fill="#ccc"/><circle cx="18" cy="3" r="1.4" fill="#ccc"/></svg>
<div class="a" style="left:627px;top:196px;width:248px;height:54px;background:#363636"></div>
<svg style="left:633px;top:206px" width="10" height="40"><path d="M1.5 1.5 H8.5 L5 7.5 Z" fill="#bbb"/><path d="M1.5 28.5 H8.5 L5 34.5 Z" fill="#bbb"/></svg>
<div class="t" style="left:651px;top:203px;font-size:14px;font-weight:600;color:#d4d4d4">打开的编辑器</div>
<div class="t" style="left:651px;top:230px;font-size:14px;font-weight:600;color:#d4d4d4">情头天天换</div>
<svg style="left:740px;top:227px" width="130" height="22">
 <path d="M13 3 V19 M5 11 H21" stroke="#c8c8c8" stroke-width="1.5"/>
 <path d="M38.5 4.5 H44 L46 6.5 H56.5 V18.5 H38.5 Z M47.5 9 V15 M44.5 12 H50.5" fill="none" stroke="#c8c8c8" stroke-width="1.3"/>
 <path d="M75 7 A7.5 7.5 0 0 1 89 9 M89 15 A7.5 7.5 0 0 1 75 13" fill="none" stroke="#c8c8c8" stroke-width="1.4"/>
 <path d="M89 5 V9.5 H85 M75 17.5 V13 H79" fill="none" stroke="#c8c8c8" stroke-width="1.3"/>
 <path d="M108 4.5 H125 M108 11.5 H117 M108 18.5 H116" stroke="#c8c8c8" stroke-width="1.4"/><path d="M119 19 L122.5 14 L126 19 Z" fill="#c8c8c8"/>
</svg>
<div class="a" style="left:627px;top:499px;width:248px;height:27px;background:#3a3a3a;border-top:1px solid #454545;border-bottom:1px solid #454545"></div>

<svg style="left:651px;top:261.2px" width="9" height="10"><path d="M1 0.5 L7.5 4.5 L1 8.5 Z" fill="#c0c0c0"/></svg>
<svg style="left:669px;top:257.2px" width="22" height="18"><path d="M1.5 1.5 H7.5 L9.5 3.5 H17.5 V15.5 H1.5 Z" fill="#d4dc4a"/><rect x="10" y="7.5" width="9" height="9" rx="1.5" fill="#e8ee7a" stroke="#d4dc4a" stroke-width="0.8"/></svg>
<div class="t" style="left:696px;top:257.2px;font-size:16px;line-height:18px;color:#dcdcdc">components</div>
<svg style="left:651px;top:288.7px" width="9" height="10"><path d="M1 0.5 L7.5 4.5 L1 8.5 Z" fill="#c0c0c0"/></svg>
<svg style="left:669px;top:284.7px" width="22" height="18"><path d="M1.5 1.5 H7.5 L9.5 3.5 H17.5 V15.5 H1.5 Z" fill="#1f9f94"/><rect x="10" y="7.5" width="9" height="9" rx="1.5" fill="#8fe0d8" stroke="#1f9f94" stroke-width="0.8"/></svg>
<div class="t" style="left:696px;top:284.7px;font-size:16px;line-height:18px;color:#dcdcdc">images</div>
<svg style="left:651px;top:316.2px" width="9" height="10"><path d="M1 0.5 L7.5 4.5 L1 8.5 Z" fill="#c0c0c0"/></svg>
<svg style="left:669px;top:312.2px" width="22" height="18"><path d="M1.5 1.5 H7.5 L9.5 3.5 H17.5 V15.5 H1.5 Z" fill="#e05a5a"/><rect x="10" y="7.5" width="9" height="9" rx="1.5" fill="#f5a0a0" stroke="#e05a5a" stroke-width="0.8"/></svg>
<div class="t" style="left:696px;top:312.2px;font-size:16px;line-height:18px;color:#dcdcdc">model</div>
<svg style="left:651px;top:343.7px" width="9" height="10"><path d="M1 0.5 L7.5 4.5 L1 8.5 Z" fill="#c0c0c0"/></svg>
<svg style="left:669px;top:339.7px" width="22" height="18"><path d="M1.5 1.5 H7.5 L9.5 3.5 H17.5 V15.5 H1.5 Z" fill="#f07a4a"/><rect x="10" y="7.5" width="9" height="9" rx="1.5" fill="#f8b090" stroke="#f07a4a" stroke-width="0.8"/></svg>
<div class="t" style="left:696px;top:339.7px;font-size:16px;line-height:18px;color:#dcdcdc">pages</div>
<svg style="left:651px;top:371.2px" width="9" height="10"><path d="M1 0.5 L7.5 4.5 L1 8.5 Z" fill="#c0c0c0"/></svg>
<svg style="left:669px;top:367.2px" width="22" height="18"><path d="M1.5 1.5 H7.5 L9.5 3.5 H17.5 V15.5 H1.5 Z" fill="#7cbf3f"/><rect x="10" y="7.5" width="9" height="9" rx="1.5" fill="#b8e090" stroke="#7cbf3f" stroke-width="0.8"/></svg>
<div class="t" style="left:696px;top:367.2px;font-size:16px;line-height:18px;color:#dcdcdc">utils</div>
<svg style="left:671px;top:393.7px" width="16" height="18"><path d="M1.5 0.5 H10 L14.5 5 V17 H1.5 Z" fill="#2aa79b"/><path d="M3 15 L6 10 L9 13 L12 8.5 V15 Z M4.5 4.5 H7.5 V7.5 H4.5 Z" fill="#bff0ea"/></svg>
<div class="t" style="left:696px;top:394.7px;font-size:16px;line-height:18px;color:#dcdcdc">1108100302.48083915...</div>
<svg style="left:671px;top:421.2px" width="16" height="18"><path d="M1.5 0.5 H10 L14.5 5 V17 H1.5 Z" fill="#2aa79b"/><path d="M3 15 L6 10 L9 13 L12 8.5 V15 Z M4.5 4.5 H7.5 V7.5 H4.5 Z" fill="#bff0ea"/></svg>
<div class="t" style="left:696px;top:422.2px;font-size:16px;line-height:18px;color:#dcdcdc">1108100302.48083915...</div>
<svg style="left:671px;top:448.7px" width="16" height="18"><path d="M1.5 0.5 H10 L14.5 5 V17 H1.5 Z" fill="#2aa79b"/><path d="M3 15 L6 10 L9 13 L12 8.5 V15 Z M4.5 4.5 H7.5 V7.5 H4.5 Z" fill="#bff0ea"/></svg>
<div class="t" style="left:696px;top:449.7px;font-size:16px;line-height:18px;color:#dcdcdc">1108100302.48083915...</div>
<svg style="left:671px;top:476.2px" width="16" height="18"><path d="M1.5 0.5 H10 L14.5 5 V17 H1.5 Z" fill="#2aa79b"/><path d="M3 15 L6 10 L9 13 L12 8.5 V15 Z M4.5 4.5 H7.5 V7.5 H4.5 Z" fill="#bff0ea"/></svg>
<div class="t" style="left:696px;top:477.2px;font-size:16px;line-height:18px;color:#dcdcdc">1108100302.48083915...</div>
<svg style="left:670px;top:504.7px" width="18" height="18"><rect x="0.5" y="0.5" width="16" height="16" fill="#f0c228"/><text x="5" y="14" font-size="7.5" font-family="Liberation Sans" fill="#5a4a10" font-weight="bold">JS</text></svg>
<div class="t" style="left:696px;top:504.7px;font-size:16px;line-height:18px;color:#dcdcdc">app.js</div>
<svg style="left:668px;top:531.2px" width="22" height="18"><text x="0" y="14.5" font-size="15" font-family="Liberation Mono" fill="#e8b63a">{</text><text x="13" y="14.5" font-size="15" font-family="Liberation Mono" fill="#e8b63a">}</text><circle cx="9.5" cy="13" r="0.9" fill="#e8b63a"/><circle cx="12" cy="13" r="0.9" fill="#e8b63a"/></svg>
<div class="t" style="left:696px;top:532.2px;font-size:16px;line-height:18px;color:#dcdcdc">app.json</div>
<svg style="left:670px;top:558.7px" width="18" height="18"><path d="M2 2 H16 L13.5 16 H0.5 L1.3 12 H9.5 L10.2 9 H2.5 L3 6 H11 L11.6 4.5 H1.6 Z" fill="#3d7ff0"/></svg>
<div class="t" style="left:696px;top:559.7px;font-size:16px;line-height:18px;color:#dcdcdc">app.wxss</div>
<svg style="left:670px;top:587.2px" width="18" height="18"><rect x="0.5" y="0.5" width="16" height="16" fill="#f0c228"/><text x="5" y="14" font-size="7.5" font-family="Liberation Sans" fill="#5a4a10" font-weight="bold">JS</text></svg>
<div class="t" style="left:696px;top:587.2px;font-size:16px;line-height:18px;color:#dcdcdc">config.js</div>
<svg style="left:668px;top:613.7px" width="22" height="18"><text x="0" y="14.5" font-size="15" font-family="Liberation Mono" fill="#e8b63a">{</text><text x="13" y="14.5" font-size="15" font-family="Liberation Mono" fill="#e8b63a">}</text><circle cx="9.5" cy="13" r="0.9" fill="#e8b63a"/><circle cx="12" cy="13" r="0.9" fill="#e8b63a"/></svg>
<div class="t" style="left:696px;top:614.7px;font-size:16px;line-height:18px;color:#dcdcdc">project.config.json</div>
<svg style="left:668px;top:641.2px" width="22" height="18"><text x="0" y="14.5" font-size="15" font-family="Liberation Mono" fill="#e8b63a">{</text><text x="13" y="14.5" font-size="15" font-family="Liberation Mono" fill="#e8b63a">}</text><circle cx="9.5" cy="13" r="0.9" fill="#e8b63a"/><circle cx="12" cy="13" r="0.9" fill="#e8b63a"/></svg>
<div class="t" style="left:696px;top:642.2px;font-size:16px;line-height:18px;color:#dcdcdc">project.private.config.js...</div>
<svg style="left:668px;top:668.7px" width="22" height="18"><text x="0" y="14.5" font-size="15" font-family="Liberation Mono" fill="#e8b63a">{</text><text x="13" y="14.5" font-size="15" font-family="Liberation Mono" fill="#e8b63a">}</text><circle cx="9.5" cy="13" r="0.9" fill="#e8b63a"/><circle cx="12" cy="13" r="0.9" fill="#e8b63a"/></svg>
<div class="t" style="left:696px;top:669.7px;font-size:16px;line-height:18px;color:#dcdcdc">sitemap.json</div>

<div class="a" style="left:627px;top:988px;width:248px;height:21px;background:#3c3c3c"></div>
<svg style="left:634px;top:995px" width="10" height="12"><path d="M1.5 1.5 L7 5.5 L1.5 9.5 Z" fill="#c8c8c8"/></svg>
<div class="t" style="left:651px;top:994.5px;font-size:14px;font-weight:700;color:#e0e0e0">大纲</div>

<!-- DEBUGGER -->
<div class="a" style="left:876px;top:700px;width:689px;height:37px;background:#323232;border-top:1px solid #3e3e3e"></div>
<div class="t" style="left:900px;top:713.5px;font-size:14px;font-weight:500;color:#a8a8a8">构建</div>
<div class="t" style="left:954px;top:713.5px;font-size:14px;font-weight:500;color:#f0f0f0">调试器</div>
<div class="a" style="left:954px;top:735px;width:41px;height:1.5px;background:#e8e8e8"></div>
<div class="a" style="left:1004px;top:709px;width:36px;height:22px;border-radius:11px;background:#cf4a3c"></div>
<div class="t" style="left:1010px;top:713px;font-size:14px;color:#fff;letter-spacing:0px">2, 3</div>
<div class="t" style="left:1064px;top:713.5px;font-size:14px;font-weight:500;color:#a8a8a8">问题</div>
<div class="t" style="left:1116px;top:713.5px;font-size:14px;font-weight:500;color:#a8a8a8">输出</div>
<div class="t" style="left:1168px;top:713.5px;font-size:14px;font-weight:500;color:#a8a8a8">终端</div>
<div class="t" style="left:1221px;top:713.5px;font-size:14px;font-weight:500;color:#a8a8a8">代码质量</div>
<svg style="left:1480px;top:712px" width="62" height="18"><path d="M5 13.5 L11 7.5 L17 13.5" fill="none" stroke="#e0e0e0" stroke-width="1.6"/><path d="M42 4 L53.5 15.5 M53.5 4 L42 15.5" stroke="#e0e0e0" stroke-width="1.6"/></svg>

<div class="a" style="left:876px;top:737px;width:689px;height:35px;background:#2a2c2f;border-bottom:1px solid #3a3a3a"></div>
<svg style="left:880px;top:740px" width="40" height="30"><path d="M16 22.5 H8.5 V7.5 H23.5 V13" fill="none" stroke="#a8a8a8" stroke-width="1.3" stroke-dasharray="0"/><path d="M16 13 L26.5 17 L22 18.5 L26 23 L24 24.5 L20 20 L18 24 Z" fill="#a8a8a8"/></svg>
<div class="a" style="left:919px;top:744px;width:1px;height:22px;background:#454545"></div>
<div class="t" style="left:941px;top:748px;font-size:15px;color:#e6e6e6">Wxml</div>
<div class="t" style="left:1009px;top:748px;font-size:15px;color:#e6e6e6">Console</div>
<div class="t" style="left:1091px;top:748px;font-size:15px;color:#e6e6e6">Sources</div>
<div class="t" style="left:1173px;top:748px;font-size:15px;color:#e6e6e6">Network</div>
<div class="a" style="left:1245px;top:738px;width:71px;height:33px;background:#000"></div>
<div class="t" style="left:1259px;top:748px;font-size:15px;color:#f2f2f2">Audits</div>
<svg style="left:1325px;top:747px" width="16" height="14"><path d="M2 2 L7 7 L2 12 M8 2 L13 7 L8 12" fill="none" stroke="#b8b8b8" stroke-width="1.5"/></svg>
<svg style="left:1377px;top:746px" width="70" height="18"><circle cx="8.5" cy="9" r="6.8" fill="#e3443e"/><path d="M6 6.5 L11 11.5 M11 6.5 L6 11.5" stroke="#fff" stroke-width="1.4"/><path d="M41 2 L48.5 15.5 H33.5 Z" fill="#f3c83a"/><path d="M41 6.5 V11 M41 12.5 V14" stroke="#3a2a00" stroke-width="1.3"/></svg>
<div class="t" style="left:1396px;top:748px;font-size:15px;color:#e6e6e6">2</div>
<div class="t" style="left:1429px;top:748px;font-size:15px;color:#e6e6e6">3</div>
<div class="a" style="left:1451px;top:744px;width:1px;height:22px;background:#454545"></div>
<svg style="left:1463px;top:743px" width="100" height="24">
 <g transform="translate(11,11.5)"><circle r="6.5" fill="#a8a8a8"/><g fill="#a8a8a8"><rect x="-2" y="-9.5" width="4" height="4"/><rect x="-2" y="5.5" width="4" height="4"/><rect x="-9.5" y="-2" width="4" height="4"/><rect x="5.5" y="-2" width="4" height="4"/><rect x="-2" y="-9.5" width="4" height="4" transform="rotate(45)"/><rect x="-2" y="5.5" width="4" height="4" transform="rotate(45)"/><rect x="-9.5" y="-2" width="4" height="4" transform="rotate(45)"/><rect x="5.5" y="-2" width="4" height="4" transform="rotate(45)"/></g><circle r="2.6" fill="#2a2a2b"/></g>
 <circle cx="47" cy="4.5" r="1.6" fill="#a8a8a8"/><circle cx="47" cy="11.5" r="1.6" fill="#a8a8a8"/><circle cx="47" cy="18.5" r="1.6" fill="#a8a8a8"/>
 <path d="M74.5 4.5 H91.5 V16.5 H74.5 Z" fill="none" stroke="#8a8a8a" stroke-width="1.5"/><rect x="74" y="10" width="12" height="10" fill="#8a8a8a"/><path d="M70.5 8.5 V21.5 H87" fill="none" stroke="#8a8a8a" stroke-width="1.5"/>
</svg>
<div class="a" style="left:1559px;top:772px;width:6px;height:237px;background:#2c2c2c"></div><div class="a" style="left:1560px;top:772px;width:4px;height:145px;background:#c4c4c4"></div>

<div class="t" style="left:920px;top:822px;font-size:21px;font-weight:500;color:#f0f0f0">体验评分</div>
<div class="t" style="left:920px;top:871px;font-size:16px;letter-spacing:0.24px;font-weight:500;color:#f0f0f0">定位和识别小程序运行过程中的体验问题，从性能、体验、最佳实践三个维度对小</div>
<div class="t" style="left:920px;top:897px;font-size:16px;letter-spacing:0.24px;font-weight:500;color:#f0f0f0">程序进行分析，同时提供优化建议。<span style="color:#3d8fe0">了解更多</span></div>
<div class="t" style="left:920px;top:953.5px;font-size:16px;font-weight:500;color:#8a8a8a">设备类型</div>
<div class="t" style="left:920px;top:979px;font-size:16px;font-weight:500;color:#8a8a8a">网络类型</div>
<div class="t" style="left:1066px;top:953.5px;font-size:16px;color:#f0f0f0">iPhone 5</div>
<div class="t" style="left:1066px;top:979px;font-size:16px;color:#f0f0f0">wifi</div>
<div class="a" style="left:876px;top:1002px;width:689px;height:7px;overflow:hidden"><div class="t" style="left:44px;top:2px;font-size:16px;font-weight:500;color:#8a8a8a">基础库版本</div><div class="t" style="left:190px;top:2px;font-size:16px;color:#f0f0f0">2.19.0</div></div>

<!-- explorer status -->
<svg style="left:644px;top:1016px" width="70" height="20"><circle cx="10" cy="9.5" r="7.5" fill="none" stroke="#b0b0b0" stroke-width="1.2"/><path d="M7 6.5 L13 12.5 M13 6.5 L7 12.5" stroke="#b0b0b0" stroke-width="1.2"/><path d="M44 2.5 L52 16.5 H36 Z" fill="none" stroke="#b0b0b0" stroke-width="1.2"/><path d="M44 7 V12 M44 13.5 V15" stroke="#b0b0b0" stroke-width="1.1"/></svg>
<div class="t" style="left:666px;top:1019px;font-size:14px;color:#b0b0b0">0</div>
<div class="t" style="left:700px;top:1019px;font-size:14px;color:#b0b0b0">0</div>

</body></html>
